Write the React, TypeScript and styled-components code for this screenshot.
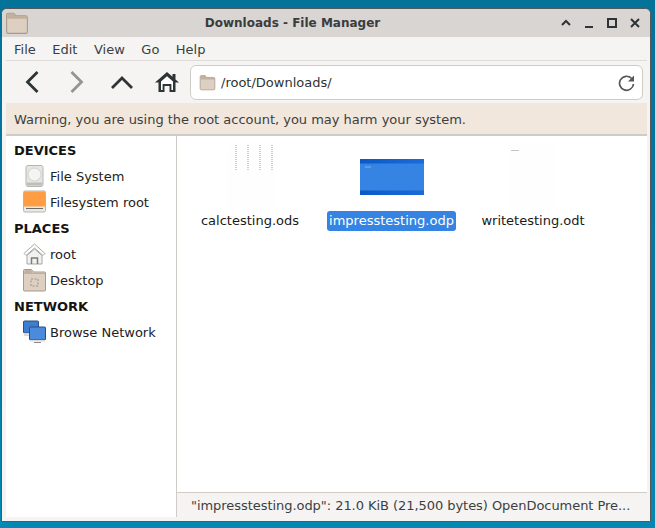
import React from "react";
import styled, { createGlobalStyle } from "styled-components";

const Global = createGlobalStyle`
  html, body { margin: 0; padding: 0; width: 655px; height: 528px; overflow: hidden; background: #03769c; }
  * { box-sizing: border-box; }
`;

const Desktop = styled.div`
  width: 655px;
  height: 528px;
  padding: 8px 4px 6px 1px;
  background: linear-gradient(180deg, #03739a 0%, #047aa3 60%, #0488b4 100%);
  font-family: "DejaVu Sans", sans-serif;
  font-size: 13px;
  color: #2e3436;
`;

const Win = styled.div`
  width: 650px;
  height: 514px;
  display: flex;
  flex-direction: column;
  background: #f5f4f2;
  border: 1px solid #55585a;
  border-top-left-radius: 6px;
  border-top-right-radius: 6px;
  overflow: hidden;
`;

const TitleBar = styled.div`
  height: 28px;
  flex: none;
  background: #d8d5d2;
  display: flex;
  align-items: center;
  padding: 0 8px 0 3px;
`;

const TitleIcon = styled.div`
  width: 24px;
  height: 26px;
  display: flex;
  align-items: center;
`;

const Title = styled.div`
  flex: 1;
  text-align: center;
  font-weight: 700;
  font-size: 12px;
  color: #3a3c3e;
  padding-right: 3px;
`;

const WinButtons = styled.div`
  display: flex;
  align-items: center;
  gap: 9px;
`;

const Body = styled.div`
  flex: 1;
  display: flex;
  flex-direction: column;
  min-height: 0;
  padding: 0 3px 4px 4px;
`;

const MenuBar = styled.div`
  height: 24px;
  flex: none;
  display: flex;
  align-items: center;
  gap: 16.5px;
  padding: 2px 0 0 8px;
  border-bottom: 1px solid #dedcd9;
`;

const MenuItem = styled.span`
  font-size: 13px;
  color: #3b3e40;
`;

const ToolBar = styled.div`
  height: 42px;
  flex: none;
  display: flex;
  align-items: center;
  padding: 0 4px 0 11px;
`;

const ToolIcon = styled.div`
  width: 30px;
  height: 30px;
  display: flex;
  align-items: center;
  justify-content: center;
  flex: none;
  margin-right: 15px;
  &:nth-child(4) { margin-right: 8px; }
`;

const PathEntry = styled.div`
  flex: 1;
  height: 35px;
  margin-top: 1px;
  border: 1px solid #cfccc7;
  border-radius: 6px;
  background: #fff;
  display: flex;
  align-items: center;
  padding: 0 6px 0 8px;
  gap: 5px;
  color: #2e3436;
`;

const PathText = styled.span`
  flex: 1;
  font-size: 13px;
`;

const Warning = styled.div`
  height: 33px;
  flex: none;
  background: #f2e7dc;
  display: flex;
  align-items: center;
  padding: 1px 8px 0;
  font-size: 13px;
  letter-spacing: -0.015px;
  color: #3c3f41;
  border-bottom: 2px solid #cfccc7;
`;

const Panes = styled.div`
  flex: 1;
  min-height: 0;
  display: flex;
`;

const Sidebar = styled.div`
  width: 171px;
  flex: none;
  background: #fff;
  border-right: 1px solid #cfccc7;
  padding: 1px 0 0 8px;
  display: flex;
  flex-direction: column;
`;

const SectionTitle = styled.div`
  height: 26px;
  display: flex;
  align-items: center;
  font-weight: 700;
  font-size: 13px;
  color: #141414;
`;

const PlaceRow = styled.div`
  height: 26px;
  display: flex;
  align-items: center;
  padding-left: 9px;
  gap: 4px;
  font-size: 13px;
  color: #222;
`;

const PlaceIcon = styled.svg`
  width: 23px;
  height: 24px;
  flex: none;
`;

const Main = styled.div`
  flex: 1;
  min-width: 0;
  display: flex;
  flex-direction: column;
`;

const Icons = styled.div`
  flex: 1;
  background: #fff;
  display: flex;
  align-items: flex-start;
  padding-top: 9px;
  padding-left: 23px;
`;

const FileItem = styled.div<{ $w: number }>`
  width: ${p => p.$w}px;
  flex: none;
  display: flex;
  flex-direction: column;
  align-items: center;
  gap: 2px;
`;

const Thumb = styled.div`
  width: 100px;
  height: 64px;
  display: flex;
  align-items: center;
  justify-content: center;
`;

const FileLabel = styled.span<{ $sel?: boolean }>`
  font-size: 13px;
  line-height: 20px;
  height: 20px;
  padding: 0 ${p => (p.$sel ? "2.5px" : "2px")};
  border-radius: 3px;
  color: ${p => (p.$sel ? "#fff" : "#1a1a1a")};
  background: ${p => (p.$sel ? "#3584e4" : "transparent")};
`;

const StatusBar = styled.div`
  height: 25px;
  flex: none;
  border-top: 1px solid #cfccc7;
  background: #f5f4f2;
  display: flex;
  align-items: center;
  padding: 1px 0 0 14px;
  font-size: 13px;
  letter-spacing: -0.05px;
  color: #3c3f41;
  white-space: nowrap;
`;

const Folder = ({ w, h }: { w: number; h: number }) => (
  <svg width={w} height={h} viewBox="0 0 22 22">
    <path d="M1.5 3.5a1.5 1.5 0 0 1 1.5-1.5h5l2 2.5h9a1.5 1.5 0 0 1 1.5 1.5v13a1.5 1.5 0 0 1-1.5 1.5H3A1.5 1.5 0 0 1 1.5 19z" fill="#ddd0c2" stroke="#a9998a" />
    <path d="M2 7h18.5V5.6a1 1 0 0 0-1-1H10L8 2.5H3a1 1 0 0 0-1 1z" fill="#c2b09c" />
  </svg>
);

const SheetThumb = () => (
  <svg width="48" height="64" viewBox="0 0 48 64">
    <rect width="48" height="64" fill="#fefefe" />
    {[10, 22, 34, 46].map(x => (
      <path key={x} d={`M${x} 0V26`} fill="none" stroke="#c4c4c4" strokeWidth="1.6" strokeDasharray="1 1" />
    ))}
  </svg>
);

const SlideThumb = () => (
  <svg width="64" height="36" viewBox="0 0 64 36">
    <defs>
      <linearGradient id="band" x1="0" x2="1" y1="0" y2="0">
        <stop offset="0" stopColor="#0a59c6" />
        <stop offset="1" stopColor="#1a6cd8" />
      </linearGradient>
    </defs>
    <rect width="64" height="36" fill="#3584e4" />
    <rect width="64" height="4.5" fill="url(#band)" />
    <rect y="31.5" width="64" height="4.5" fill="url(#band)" />
    <rect x="5" y="7" width="6" height="2" fill="#5a9ae8" />
  </svg>
);

const DocThumb = () => (
  <svg width="48" height="64" viewBox="0 0 48 64">
    <rect width="48" height="64" fill="#fefefe" />
    <rect x="2" y="5" width="8" height="1" fill="#c4c4c4" />
  </svg>
);

export default function App() {
  return (
    <Desktop>
      <Global />
      <Win>
        <TitleBar>
          <TitleIcon><Folder w={24} h={24} /></TitleIcon>
          <Title>Downloads - File Manager</Title>
          <WinButtons>
            <svg width="14" height="14" viewBox="0 0 14 14"><path d="M3 9l4-4 4 4" fill="none" stroke="#2e3436" strokeWidth="2" /></svg>
            <svg width="14" height="14" viewBox="0 0 14 14"><path d="M3 11h8" fill="none" stroke="#2e3436" strokeWidth="2" /></svg>
            <svg width="14" height="14" viewBox="0 0 14 14"><rect x="3" y="3" width="8" height="8" fill="none" stroke="#2e3436" strokeWidth="2" /></svg>
            <svg width="14" height="14" viewBox="0 0 14 14"><path d="M3 3l8 8M11 3l-8 8" fill="none" stroke="#2e3436" strokeWidth="2" /></svg>
          </WinButtons>
        </TitleBar>
        <Body>
          <MenuBar>
            {["File", "Edit", "View", "Go", "Help"].map(m => <MenuItem key={m}>{m}</MenuItem>)}
          </MenuBar>
          <ToolBar>
            <ToolIcon>
              <svg width="16" height="24" viewBox="0 0 16 24"><path d="M13.5 2L3.5 12l10 10" fill="none" stroke="#2e3436" strokeWidth="2.8" /></svg>
            </ToolIcon>
            <ToolIcon>
              <svg width="16" height="24" viewBox="0 0 16 24"><path d="M2.5 2l10 10-10 10" fill="none" stroke="#929595" strokeWidth="2.8" /></svg>
            </ToolIcon>
            <ToolIcon>
              <svg width="24" height="16" viewBox="0 0 24 16"><path d="M2 14l10-10 10 10" fill="none" stroke="#2e3436" strokeWidth="2.8" /></svg>
            </ToolIcon>
            <ToolIcon>
              <svg width="24" height="20" viewBox="0 0 24 20">
                <path d="M12 0L0 10.5h3.5V20h6v-6h5v6h6v-9.5H24L20.5 7.4V2h-3v2.8z" fill="#2e3436" />
                <path d="M12 4.2L6 9.6V18h1.6v-6h8.8v6H18V9.6z" fill="#fff" />
              </svg>
            </ToolIcon>
            <PathEntry>
              <Folder w={17} h={17} />
              <PathText>/root/Downloads/</PathText>
              <svg width="18" height="18" viewBox="0 0 18 18">
                <path d="M15.5 10A7 7 0 1 1 13.4 4.2" fill="none" stroke="#555" strokeWidth="1.7" />
                <path d="M16 1.5v6h-6z" fill="#555" />
              </svg>
            </PathEntry>
          </ToolBar>
          <Warning>Warning, you are using the root account, you may harm your system.</Warning>
          <Panes>
            <Sidebar>
              <SectionTitle>DEVICES</SectionTitle>
              <PlaceRow>
                <PlaceIcon viewBox="0 0 23 24">
                  <rect x="3" y="1.5" width="17" height="21" rx="2" fill="#e6e6e3" stroke="#b5b5b2" />
                  <circle cx="11.5" cy="10.5" r="6.5" fill="#f4f4f2" stroke="#d2d2cf" />
                  <rect x="4" y="18.5" width="15" height="3" fill="#bdbdb9" />
                </PlaceIcon>
                File System
              </PlaceRow>
              <PlaceRow>
                <PlaceIcon viewBox="0 0 23 24">
                  <rect x="0.5" y="1" width="22" height="21" rx="1.5" fill="#e9e9e6" stroke="#b5b5b2" />
                  <rect x="1" y="1.5" width="21" height="15" fill="#ff9d42" />
                  <rect x="3" y="18" width="17" height="1" fill="#6a6a68" />
                </PlaceIcon>
                Filesystem root
              </PlaceRow>
              <SectionTitle>PLACES</SectionTitle>
              <PlaceRow>
                <PlaceIcon viewBox="0 0 23 24">
                  <path d="M11.5 2L1 11.5l2 2 8.5-7.5 8.5 7.5 2-2z" fill="#fff" stroke="#a8a8a4" />
                  <path d="M4 13.5v8.5h15v-8.5l-7.5-6.5z" fill="#f2f2f0" stroke="#a8a8a4" />
                  <path d="M8.5 22v-6h6v6" fill="none" stroke="#7c7c78" strokeWidth="1.5" />
                </PlaceIcon>
                root
              </PlaceRow>
              <PlaceRow>
                <PlaceIcon viewBox="0 0 23 24">
                  <path d="M0.5 2.5a1 1 0 0 1 1-1h7l2 2.5h11a1 1 0 0 1 1 1v17a1 1 0 0 1-1 1h-20a1 1 0 0 1-1-1z" fill="#ddd0c2" stroke="#a9998a" />
                  <path d="M1 6h21V5H10L8 2H1.500z" fill="#c2b09c" />
                  <rect x="8" y="11" width="7" height="7" fill="none" stroke="#a08f7e" strokeDasharray="2 1.5" />
                </PlaceIcon>
                Desktop
              </PlaceRow>
              <SectionTitle>NETWORK</SectionTitle>
              <PlaceRow>
                <PlaceIcon viewBox="0 0 23 24">
                  <rect x="0.5" y="1" width="15" height="12" rx="1" fill="#3f7dd0" stroke="#2b4f80" />
                  <rect x="1" y="13" width="14" height="3" fill="#d9d9d6" />
                  <rect x="6.5" y="7" width="16" height="13" rx="1" fill="#4a8bdc" stroke="#2b4f80" />
                  <rect x="7" y="20" width="15" height="1.5" fill="#d9d9d6" />
                  <rect x="11" y="22" width="7" height="1" fill="#8a8a88" />
                </PlaceIcon>
                Browse Network
              </PlaceRow>
            </Sidebar>
            <Main>
              <Icons>
                <FileItem $w={100}>
                  <Thumb><SheetThumb /></Thumb>
                  <FileLabel>calctesting.ods</FileLabel>
                </FileItem>
                <FileItem $w={183}>
                  <Thumb><SlideThumb /></Thumb>
                  <FileLabel $sel>impresstesting.odp</FileLabel>
                </FileItem>
                <FileItem $w={100}>
                  <Thumb><DocThumb /></Thumb>
                  <FileLabel>writetesting.odt</FileLabel>
                </FileItem>
              </Icons>
              <StatusBar>"impresstesting.odp": 21.0 KiB (21,500 bytes) OpenDocument Pre...</StatusBar>
            </Main>
          </Panes>
        </Body>
      </Win>
    </Desktop>
  );
}
